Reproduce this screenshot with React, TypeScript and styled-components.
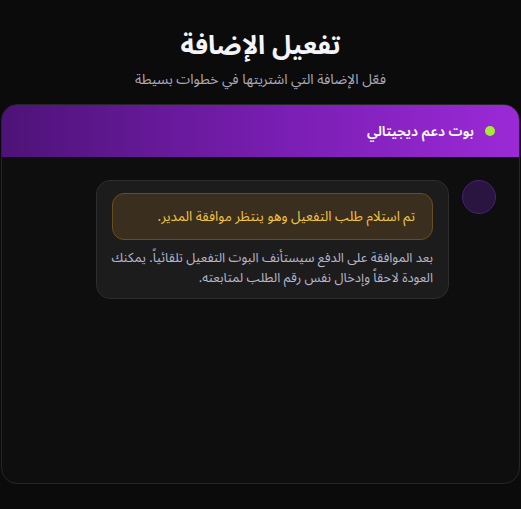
import React from 'react';
import styled, { createGlobalStyle } from 'styled-components';

const GlobalStyle = createGlobalStyle`
  * {
    box-sizing: border-box;
  }

  html,
  body {
    margin: 0;
    padding: 0;
    background: #0b0b0b;
    font-family: 'Noto Sans Arabic', 'DejaVu Sans', sans-serif;
  }
`;

const Page = styled.div`
  direction: rtl;
  min-height: 509px;
  padding: 28px 1px 0;
  display: flex;
  flex-direction: column;
  align-items: center;
`;

const Title = styled.h1`
  margin: 0;
  font-size: 26px;
  line-height: 36px;
  font-weight: 700;
  color: #f4f4f8;
`;

const Subtitle = styled.p`
  margin: 4px 0 0;
  font-size: 14px;
  line-height: 24px;
  color: #a9a9b6;
`;

const Card = styled.section`
  margin-top: 12px;
  width: 100%;
  height: 380px;
  border: 1px solid #262626;
  border-radius: 16px;
  background: #0e0e0e;
  overflow: hidden;
  display: flex;
  flex-direction: column;
`;

const CardHeader = styled.header`
  height: 52px;
  flex-shrink: 0;
  display: flex;
  align-items: center;
  gap: 11px;
  padding: 0 24px;
  background: linear-gradient(270deg, #9b2ad6 0%, #7a1eb4 45%, #4d1377 100%);
`;

const StatusDot = styled.span<{ $color: string }>`
  width: 10px;
  height: 10px;
  border-radius: 50%;
  background: ${(p) => p.$color};
`;

const BotName = styled.span`
  font-size: 14px;
  font-weight: 600;
  color: #ffffff;
`;

const ChatBody = styled.div`
  flex: 1;
  padding: 23px 23px;
  display: flex;
  flex-direction: column;
  gap: 12px;
`;

const MessageRow = styled.div`
  display: flex;
  align-items: flex-start;
  gap: 13px;
`;

const Avatar = styled.div`
  width: 34px;
  height: 34px;
  flex-shrink: 0;
  border-radius: 50%;
  background: #2a1540;
  border: 1px solid #4a1f78;
`;

const Bubble = styled.div`
  width: 353px;
  flex-shrink: 0;
  padding: 12px 15px 10px;
  border-radius: 14px;
  background: #1c1c1c;
  border: 1px solid #2e2e2e;
`;

const Notice = styled.div`
  min-height: 47px;
  display: flex;
  align-items: center;
  padding: 0 17px;
  border-radius: 12px;
  background: #3a2f1e;
  border: 1px solid #6a4d1c;
  color: #f4c443;
  font-size: 13.5px;
`;

const Hint = styled.p`
  margin: 8px 0 0;
  font-size: 13px;
  line-height: 20px;
  color: #b6b6cc;
`;

const HintLine = styled.span`
  display: block;
  white-space: nowrap;
`;

export default function App() {
  return (
    <>
      <GlobalStyle />
      <Page>
        <Title>تفعيل الإضافة</Title>
        <Subtitle>فعّل الإضافة التي اشتريتها في خطوات بسيطة</Subtitle>

        <Card>
          <CardHeader>
            <StatusDot $color="#a6ea3a" />
            <BotName>بوت دعم ديجيتالي</BotName>
          </CardHeader>

          <ChatBody>
            <MessageRow>
              <Avatar />
              <Bubble>
                <Notice>تم استلام طلب التفعيل وهو ينتظر موافقة المدير.</Notice>
                <Hint>
                  <HintLine>بعد الموافقة على الدفع سيستأنف البوت التفعيل تلقائياً. يمكنك</HintLine>
                  <HintLine>العودة لاحقاً وإدخال نفس رقم الطلب لمتابعته.</HintLine>
                </Hint>
              </Bubble>
            </MessageRow>
          </ChatBody>
        </Card>
      </Page>
    </>
  );
}
